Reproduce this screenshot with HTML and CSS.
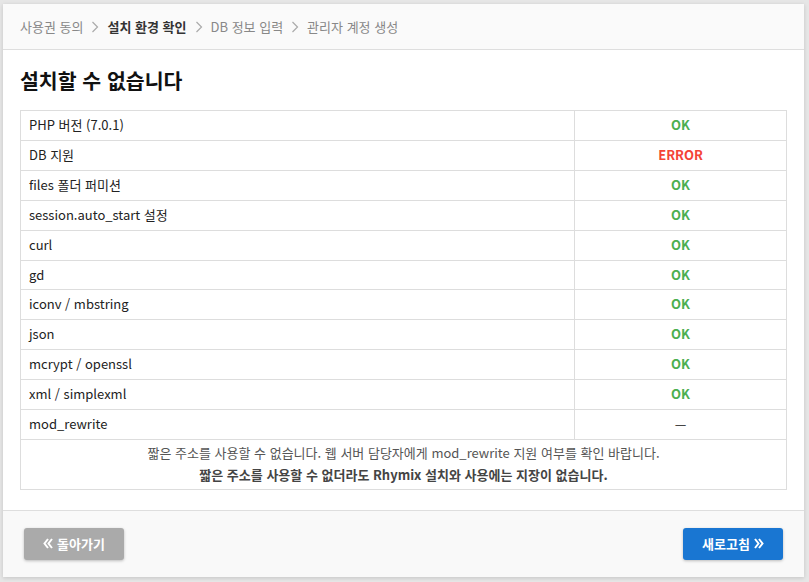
FILE: index.html
```html
<!DOCTYPE html>
<html lang="ko">

<head>
    <meta charset="UTF-8">
    <meta name="viewport" content="width=device-width, initial-scale=1.0">
    <title>Rhymix 설치</title>
    <link rel="stylesheet" href="styles.css">
</head>

<body>
    <div class="card">
        <div class="steps">
            <span class="step">사용권 동의</span>
            <svg class="sep" width="8" height="12" viewBox="0 0 8 12"><path d="M1.5 1 L6.5 6 L1.5 11" fill="none" stroke="#aaa" stroke-width="1.2"/></svg>
            <span class="step active">설치 환경 확인</span>
            <svg class="sep" width="8" height="12" viewBox="0 0 8 12"><path d="M1.5 1 L6.5 6 L1.5 11" fill="none" stroke="#aaa" stroke-width="1.2"/></svg>
            <span class="step">DB 정보 입력</span>
            <svg class="sep" width="8" height="12" viewBox="0 0 8 12"><path d="M1.5 1 L6.5 6 L1.5 11" fill="none" stroke="#aaa" stroke-width="1.2"/></svg>
            <span class="step">관리자 계정 생성</span>
        </div>

        <div class="content">
            <h1>설치할 수 없습니다</h1>
            <table class="check">
                <tr><td>PHP 버전 (7.0.1)</td><td class="ok">OK</td></tr>
                <tr><td>DB 지원</td><td class="error">ERROR</td></tr>
                <tr><td>files 폴더 퍼미션</td><td class="ok">OK</td></tr>
                <tr><td>session.auto_start 설정</td><td class="ok">OK</td></tr>
                <tr><td>curl</td><td class="ok">OK</td></tr>
                <tr><td>gd</td><td class="ok">OK</td></tr>
                <tr><td>iconv / mbstring</td><td class="ok">OK</td></tr>
                <tr><td>json</td><td class="ok">OK</td></tr>
                <tr><td>mcrypt / openssl</td><td class="ok">OK</td></tr>
                <tr><td>xml / simplexml</td><td class="ok">OK</td></tr>
                <tr><td>mod_rewrite</td><td class="none">&mdash;</td></tr>
                <tr>
                    <td colspan="2" class="note">
                        <p>짧은 주소를 사용할 수 없습니다. 웹 서버 담당자에게 mod_rewrite 지원 여부를 확인 바랍니다.</p>
                        <p class="strong">짧은 주소를 사용할 수 없더라도 Rhymix 설치와 사용에는 지장이 없습니다.</p>
                    </td>
                </tr>
            </table>
        </div>

        <div class="footer">
            <button class="btn back">
                <svg width="10" height="11" viewBox="0 0 10 11"><path d="M5 1 L1.5 5.5 L5 10 M9 1 L5.5 5.5 L9 10" fill="none" stroke="#fff" stroke-width="2"/></svg>
                돌아가기
            </button>
            <button class="btn next">
                새로고침
                <svg width="10" height="11" viewBox="0 0 10 11"><path d="M1 1 L4.5 5.5 L1 10 M5 1 L8.5 5.5 L5 10" fill="none" stroke="#fff" stroke-width="2"/></svg>
            </button>
        </div>
    </div>
</body>

</html>
```

FILE: styles.css
```css
body {
    font-family: "Noto Sans CJK KR", "Noto Sans", sans-serif;
    background-color: #e6e6e6;
    margin: 0;
    padding: 4px 5px 5px 3px;
    color: #222;
}

.card {
    background: white;
    box-shadow: 0 1px 4px rgba(0, 0, 0, 0.15);
}

.steps {
    height: 45px;
    background: #fafafa;
    border-bottom: 1px solid #dedede;
    padding: 0 17px;
    display: flex;
    align-items: center;
    gap: 8px;
    font-size: 13px;
}

.step {
    color: #888;
}

.step.active {
    color: #333;
    font-weight: bold;
}

.content {
    padding: 16px 17px 20px 17px;
}

h1 {
    font-size: 20.5px;
    font-weight: bold;
    color: #111;
    margin: 0 0 16px 0;
    line-height: 28px;
}

.check {
    width: 100%;
    border-collapse: collapse;
    font-size: 13px;
}

.check td {
    border: 1px solid #dddddd;
    padding: 5px 8px;
    line-height: 18.9px;
}

.check td:first-child {
    width: 537px;
}

.ok,
.error,
.none {
    text-align: center;
    font-weight: bold;
}

.ok {
    color: #4caf50;
}

.error {
    color: #f44336;
}

.none {
    font-weight: normal;
    color: #111;
}

.check td.note {
    text-align: center;
    padding: 2px 8px 3px;
    line-height: 22px;
    color: #555;
}

.note p {
    margin: 0;
}

.note .strong {
    font-weight: bold;
    color: #444;
}

.footer {
    background: #f9f9f9;
    border-top: 1px solid #dedede;
    height: 66px;
    padding: 0 21px;
    display: flex;
    align-items: center;
    justify-content: space-between;
}

.btn {
    width: 100px;
    height: 32px;
    border: none;
    border-radius: 3px;
    color: white;
    font-family: inherit;
    font-size: 13px;
    font-weight: bold;
    display: flex;
    align-items: center;
    justify-content: center;
    gap: 4px;
    box-shadow: 0 1px 3px rgba(0, 0, 0, 0.25);
    cursor: pointer;
}

.back {
    background: #aaaaaa;
}

.next {
    background: #1976d2;
}
```
